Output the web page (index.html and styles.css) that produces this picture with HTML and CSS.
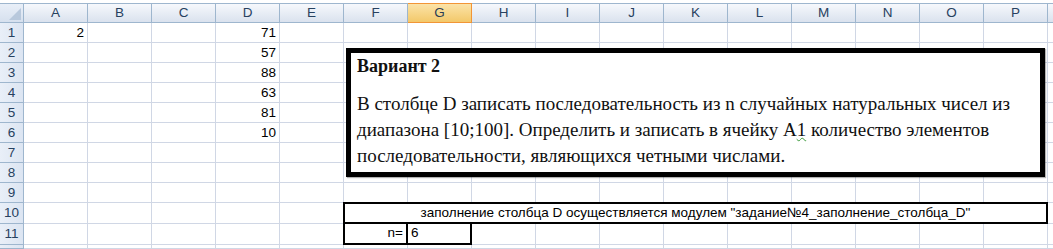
FILE: index.html
```html
<!DOCTYPE html>
<html lang="ru">
<head>
    <meta charset="UTF-8">
    <title>Лист1</title>
    <link rel="stylesheet" href="styles.css">
</head>
<body>

<div class="sheet">
    <div class="grid" id="grid"></div>

    <!-- Надпись с заданием -->
    <div class="task-box">
        <div class="task-title">Вариант 2</div>
        <p class="task-text">В столбце D записать последовательность из n случайных натуральных чисел из диапазона [10;100]. Определить и записать в ячейку А<span class="spell">1</span> количество элементов последовательности, являющихся четными числами.</p>
    </div>
</div>

<script>
    const cols = ["A","B","C","D","E","F","G","H","I","J","K","L","M","N","O","P"];
    const values = { "A1": "2", "D1": "71", "D2": "57", "D3": "88", "D4": "63", "D5": "81", "D6": "10" };
    const grid = document.getElementById("grid");

    function cell(cls, text) {
        const el = document.createElement("div");
        el.className = cls;
        if (text) el.textContent = text;
        grid.appendChild(el);
        return el;
    }

    // заголовки столбцов
    cell("corner");
    cols.forEach(c => cell(c === "G" ? "col-head active" : "col-head", c));
    cell("col-head");

    for (let r = 1; r <= 12; r++) {
        cell("row-head", r <= 11 ? String(r) : "");
        if (r === 10) {
            cols.slice(0, 5).forEach(() => cell("cell"));
            cell("cell merged", 'заполнение столбца D осуществляется модулем "задание№4_заполнение_столбца_D"');
            cell("cell");
            continue;
        }
        cols.forEach(c => {
            if (r === 11 && c === "F") return cell("cell boxed right", "n=");
            if (r === 11 && c === "G") return cell("cell boxed", "6");
            const v = values[c + r];
            cell(v ? "cell num" : "cell", v);
        });
        cell("cell");
    }
</script>

</body>
</html>
```

FILE: styles.css
```css
body {
    margin: 0;
    padding: 0;
    background-color: #fff;
    font-family: 'Liberation Sans', Arial, sans-serif;
    overflow: hidden;
}
.sheet {
    position: relative;
    padding-top: 3px;
    height: 249px;
    box-sizing: border-box;
}
.grid {
    display: grid;
    grid-template-columns: 24px repeat(16, 64px) 1fr;
    grid-template-rows: 20px repeat(9, 20px) 21px 21px 4px;
}
.corner, .col-head, .row-head, .cell {
    box-sizing: border-box;
    font-size: 13.5px;
}
.corner {
    background: linear-gradient(#e9eff8, #d6e0ee);
    border-right: 1px solid #9eb6ce;
    border-bottom: 1px solid #9eb6ce;
    border-top: 1px solid #9eb6ce;
    position: relative;
}
.corner::after {
    content: "";
    position: absolute;
    right: 2px;
    bottom: 2px;
    border-left: 12px solid transparent;
    border-bottom: 12px solid #b8c8dc;
}
.col-head {
    background: linear-gradient(#f6f8fc, #dae2ee);
    border-right: 1px solid #9eb6ce;
    border-bottom: 1px solid #9eb6ce;
    border-top: 1px solid #9eb6ce;
    color: #27415f;
    text-align: center;
    line-height: 18px;
}
.col-head.active {
    background: linear-gradient(#fbe3a8, #f3c86a);
    border-right-color: #f29536;
    border-bottom-color: #f29536;
    border-top-color: #f29536;
    color: #2b3e55;
}
.row-head {
    background: linear-gradient(90deg, #e9eff8, #dce5f2);
    border-right: 1px solid #9eb6ce;
    border-bottom: 1px solid #9eb6ce;
    color: #27415f;
    text-align: center;
    line-height: 20px;
}
.cell {
    border-right: 1px solid #d0d7e5;
    border-bottom: 1px solid #d0d7e5;
    padding: 0 3px;
    line-height: 19px;
    color: #000;
    white-space: nowrap;
    overflow: hidden;
}
.num {
    text-align: right;
}
.merged {
    grid-column: 7 / 18;
    border: 2px solid #000;
    margin: -1px 0 0 -1px;
    text-align: center;
    line-height: 17px;
}
.boxed {
    border: 2px solid #000;
    border-top: none;
    margin-left: -1px;
    line-height: 18px;
}
.boxed + .boxed {
    border-left: none;
    margin-left: 0;
}
.right {
    text-align: right;
}
.task-box {
    position: absolute;
    left: 346px;
    top: 48px;
    width: 699px;
    height: 129px;
    box-sizing: border-box;
    border: 5px solid #000;
    background-color: #fff;
    padding: 1px 6px 0;
    font-family: 'Liberation Serif', 'Times New Roman', serif;
    color: #111;
    box-shadow: 1px 1px 1px rgba(0, 0, 0, 0.3);
}
.task-title {
    font-weight: bold;
    font-size: 18px;
    line-height: 24px;
}
.task-text {
    margin: 13px 0 0;
    font-size: 19px;
    line-height: 26px;
}
.spell {
    text-decoration: underline wavy #3c9a3c;
    text-decoration-thickness: 1px;
}
```
